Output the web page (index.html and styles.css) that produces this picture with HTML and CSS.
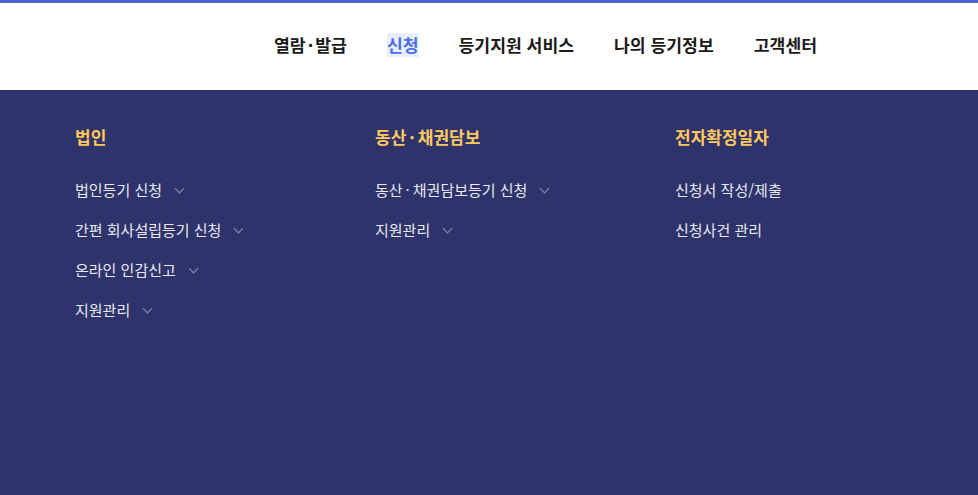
FILE: index.html
```html
<!DOCTYPE html>
<html lang="ko">
<head>
    <meta charset="UTF-8">
    <meta name="viewport" content="width=device-width, initial-scale=1.0">
    <title>인터넷등기소</title>
    <link rel="stylesheet" href="styles.css">
</head>
<body>
    <header class="header">
        <nav class="gnb">
            <a href="#">열람<span class="dot">·</span>발급</a>
            <a href="#" class="active">신청</a>
            <a href="#">등기지원 서비스</a>
            <a href="#">나의 등기정보</a>
            <a href="#">고객센터</a>
        </nav>
    </header>

    <div class="mega-menu">
        <div class="menu-col">
            <h3>법인</h3>
            <ul>
                <li class="has-sub">법인등기 신청</li>
                <li class="has-sub">간편 회사설립등기 신청</li>
                <li class="has-sub">온라인 인감신고</li>
                <li class="has-sub">지원관리</li>
            </ul>
        </div>
        <div class="menu-col">
            <h3>동산<span class="dot">·</span>채권담보</h3>
            <ul>
                <li class="has-sub">동산<span class="dot">·</span>채권담보등기 신청</li>
                <li class="has-sub">지원관리</li>
            </ul>
        </div>
        <div class="menu-col">
            <h3>전자확정일자</h3>
            <ul>
                <li>신청서 작성/제출</li>
                <li>신청사건 관리</li>
            </ul>
        </div>
    </div>
</body>
</html>
```

FILE: styles.css
```css
:root {
    --top-line: #4f5fcb;
    --navy: #2e336b;
    --gold: #ffc95c;
    --text: #1a1a1a;
    --link: #4a6ee0;
}

* {
    box-sizing: border-box;
    margin: 0;
    padding: 0;
}

body {
    font-family: 'Noto Sans CJK KR', 'Noto Sans', sans-serif;
    background: var(--navy);
    min-height: 100vh;
}

.header {
    background: #fff;
    border-top: 3px solid var(--top-line);
    height: 90px;
    display: flex;
    align-items: center;
}

.gnb {
    display: flex;
    gap: 40px;
    padding-left: 274px;
    padding-bottom: 3px;
}

.gnb a {
    color: var(--text);
    text-decoration: none;
    font-size: 17.2px;
    font-weight: bold;
    line-height: 24px;
}

.gnb a.active {
    color: var(--link);
    background: #e8eef9;
}

.dot {
    margin: 0 3px;
}

.gnb .dot {
    margin: 0 2px;
}

.mega-menu {
    display: flex;
    padding: 35px 0 0 75px;
}

.menu-col {
    width: 300px;
}

.menu-col h3 {
    color: var(--gold);
    font-size: 17px;
    font-weight: bold;
    line-height: 24px;
    margin-bottom: 21px;
}

.menu-col ul {
    list-style: none;
}

.menu-col li {
    color: #e8e9f1;
    font-size: 15px;
    line-height: 40px;
}

.has-sub::after {
    content: '';
    display: inline-block;
    width: 6px;
    height: 6px;
    margin-left: 14px;
    border-right: 1px solid #9094b8;
    border-bottom: 1px solid #9094b8;
    transform: rotate(45deg);
    vertical-align: 4px;
}
```
